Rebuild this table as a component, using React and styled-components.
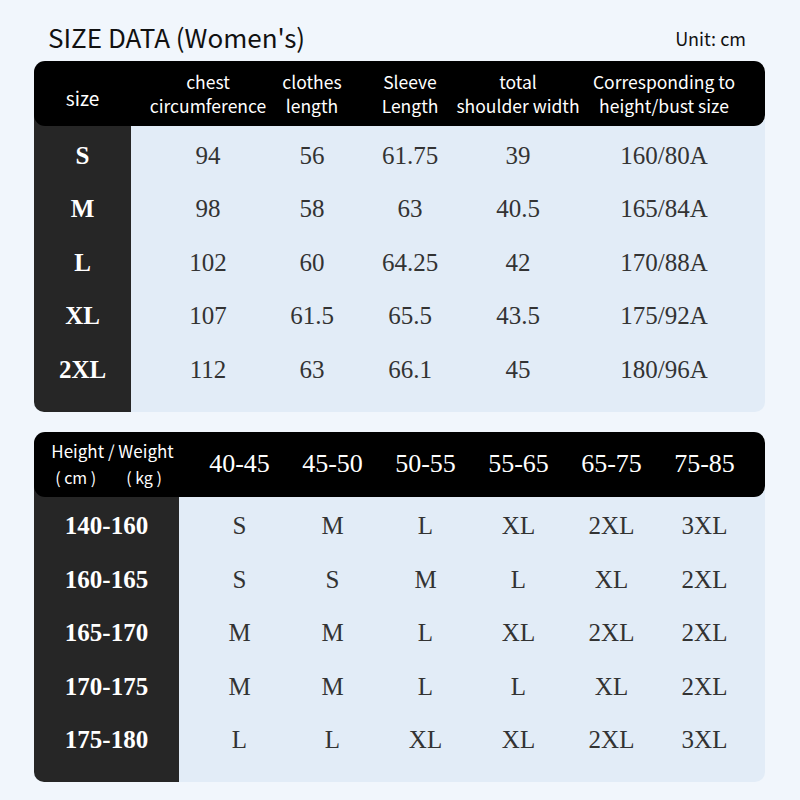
import React from "react"
import styled, { createGlobalStyle } from "styled-components"

const sizeHeaders = [
  ["chest", "circumference"],
  ["clothes", "length"],
  ["Sleeve", "Length"],
  ["total", "shoulder width"],
  ["Corresponding to", "height/bust size"],
]

const sizeRows = [
  ["S", "94", "56", "61.75", "39", "160/80A"],
  ["M", "98", "58", "63", "40.5", "165/84A"],
  ["L", "102", "60", "64.25", "42", "170/88A"],
  ["XL", "107", "61.5", "65.5", "43.5", "175/92A"],
  ["2XL", "112", "63", "66.1", "45", "180/96A"],
]

const weightHeaders = ["40-45", "45-50", "50-55", "55-65", "65-75", "75-85"]

const weightRows = [
  ["140-160", "S", "M", "L", "XL", "2XL", "3XL"],
  ["160-165", "S", "S", "M", "L", "XL", "2XL"],
  ["165-170", "M", "M", "L", "XL", "2XL", "2XL"],
  ["170-175", "M", "M", "L", "L", "XL", "2XL"],
  ["175-180", "L", "L", "XL", "XL", "2XL", "3XL"],
]

const SIZE_COLS = "112px 96px 100px 116px 176px"
const WEIGHT_COLS = "repeat(6, 93px)"

const App = () => {
  return (
    <Page>
      <GlobalStyle />
      <TitleRow>
        <Title>SIZE DATA (Women's)</Title>
        <Unit>Unit: cm</Unit>
      </TitleRow>

      <Table>
        <HeaderBar>
          <HeaderLead $width={97}>
            <SizeLabel>size</SizeLabel>
          </HeaderLead>
          <HeaderGrid $cols={SIZE_COLS} $pad={21}>
            {sizeHeaders.map(([a, b]) => (
              <HeaderCell key={a + b}>
                <span>{a}</span>
                <span>{b}</span>
              </HeaderCell>
            ))}
          </HeaderGrid>
        </HeaderBar>
        <Body>
          <LeadColumn $width={97}>
            {sizeRows.map(row => (
              <LeadCell key={row[0]}>{row[0]}</LeadCell>
            ))}
          </LeadColumn>
          <DataGrid $cols={SIZE_COLS} $pad={21}>
            {sizeRows.map(row =>
              row.slice(1).map((val, i) => (
                <DataCell key={row[0] + i}>{val}</DataCell>
              ))
            )}
          </DataGrid>
        </Body>
      </Table>

      <Table>
        <HeaderBar>
          <HeaderLead $width={145}>
            <HWLabel>
              <span>Height / Weight</span>
              <HWUnits>
                <span>( cm )</span>
                <span>( kg )</span>
              </HWUnits>
            </HWLabel>
          </HeaderLead>
          <HeaderGrid $cols={WEIGHT_COLS} $pad={14}>
            {weightHeaders.map(h => (
              <RangeCell key={h}>{h}</RangeCell>
            ))}
          </HeaderGrid>
        </HeaderBar>
        <Body>
          <LeadColumn $width={145}>
            {weightRows.map(row => (
              <LeadCell key={row[0]}>{row[0]}</LeadCell>
            ))}
          </LeadColumn>
          <DataGrid $cols={WEIGHT_COLS} $pad={14}>
            {weightRows.map(row =>
              row.slice(1).map((val, i) => (
                <DataCell key={row[0] + i}>{val}</DataCell>
              ))
            )}
          </DataGrid>
        </Body>
      </Table>
    </Page>
  )
}

const GlobalStyle = createGlobalStyle`
  html, body {
    margin: 0;
    padding: 0;
    background: #f1f6fc;
  }
`

const Page = styled.div`
  width: 800px;
  height: 800px;
  box-sizing: border-box;
  padding: 16px 35px 0 34px;
  background: #f1f6fc;
  display: flex;
  flex-direction: column;
  gap: 20px;
  font-family: "Noto Sans CJK SC", "Noto Sans", sans-serif;
`

const TitleRow = styled.div`
  height: 40px;
  margin-bottom: -15px;
  padding: 0 19px 0 14px;
  display: flex;
  align-items: center;
  justify-content: space-between;
`

const Title = styled.h1`
  margin: 0;
  font-size: 26px;
  font-weight: 400;
  color: #111;
`

const Unit = styled.span`
  font-size: 18px;
  font-weight: 400;
  color: #111;
  padding-top: 4px;
`

const Table = styled.section`
  display: flex;
  flex-direction: column;
`

const HeaderBar = styled.div`
  position: relative;
  z-index: 1;
  height: 65px;
  display: flex;
  background: #000;
  border-radius: 11px;
  color: #fff;
`

const HeaderLead = styled.div`
  width: ${p => p.$width}px;
  flex-shrink: 0;
  display: flex;
  align-items: center;
  justify-content: center;
`

const SizeLabel = styled.span`
  font-size: 19px;
  padding-top: 8px;
`

const HWLabel = styled.div`
  display: flex;
  flex-direction: column;
  align-items: center;
  padding-left: 12px;
  font-size: 17px;
  line-height: 26px;
  white-space: pre;
`

const HWUnits = styled.div`
  display: flex;
  gap: 30px;
  font-size: 16px;
  padding-right: 8px;
`

const HeaderGrid = styled.div`
  display: grid;
  grid-template-columns: ${p => p.$cols};
  padding-left: ${p => p.$pad}px;
  align-items: center;
`

const HeaderCell = styled.div`
  display: flex;
  flex-direction: column;
  align-items: center;
  font-size: 17.5px;
  line-height: 24px;
  white-space: nowrap;
`

const RangeCell = styled.div`
  display: flex;
  justify-content: center;
  font-family: "Liberation Serif", serif;
  font-size: 26px;
  white-space: nowrap;
`

const Body = styled.div`
  display: flex;
  margin-top: -12px;
  background: #e2ecf7;
  border-radius: 0 0 10px 10px;
`

const LeadColumn = styled.div`
  width: ${p => p.$width}px;
  flex-shrink: 0;
  box-sizing: border-box;
  padding: 15px 0 15px;
  background: #262626;
  border-radius: 0 0 0 10px;
  display: flex;
  flex-direction: column;
`

const LeadCell = styled.div`
  height: 53.5px;
  display: flex;
  align-items: center;
  justify-content: center;
  font-family: "Liberation Serif", serif;
  font-weight: 700;
  font-size: 25px;
  color: #fff;
`

const DataGrid = styled.div`
  display: grid;
  grid-template-columns: ${p => p.$cols};
  grid-auto-rows: 53.5px;
  padding: 15px 0 15px ${p => p.$pad}px;
`

const DataCell = styled.div`
  display: flex;
  align-items: center;
  justify-content: center;
  font-family: "Liberation Serif", serif;
  font-size: 25px;
  color: #333;
  white-space: nowrap;
`

export default App
